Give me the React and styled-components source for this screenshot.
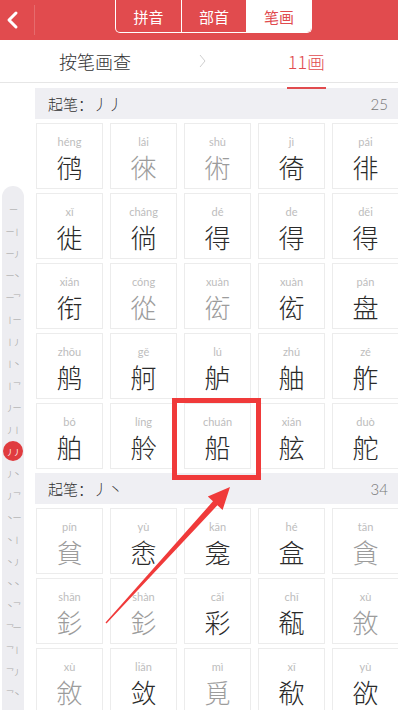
import React from "react";
import styled, { createGlobalStyle } from "styled-components";

const GlobalStyle = createGlobalStyle`
  html, body {
    margin: 0;
    padding: 0;
    background: #fff;
  }
  body {
    font-family: "Noto Sans CJK SC", "Noto Sans", sans-serif;
  }
  * {
    box-sizing: border-box;
  }
`;

const Page = styled.div`
  position: relative;
  width: 398px;
  height: 710px;
  overflow: hidden;
  background: #fff;
`;

const TopBar = styled.header`
  display: flex;
  align-items: center;
  height: 40px;
  background: #e14b4e;
`;

const BackButton = styled.div`
  display: flex;
  align-items: center;
  justify-content: flex-start;
  width: 35px;
  height: 30px;
  padding-left: 6px;
  border-right: 1px solid rgba(255, 255, 255, 0.18);
`;

const Segmented = styled.div`
  display: flex;
  align-self: flex-start;
  height: 33px;
  margin-left: 80px;
  border: 1px solid #fff;
  border-top: none;
  border-radius: 0 0 5px 5px;
  overflow: hidden;
`;

const SegTab = styled.div`
  display: flex;
  align-items: center;
  justify-content: center;
  width: 65px;
  font-size: 15px;
  color: ${p => (p.active ? "#e14b4e" : "#fff")};
  background: ${p => (p.active ? "#fff" : "transparent")};
  & + & {
    border-left: 1px solid #fff;
  }
`;

const TabRow = styled.nav`
  display: grid;
  grid-template-columns: 190px 25px 1fr;
  height: 43px;
  border-bottom: 1px solid #e6e6e6;
`;

const TabLabel = styled.div`
  display: flex;
  align-items: center;
  justify-content: center;
  font-size: 18px;
  font-weight: 300;
  color: ${p => (p.active ? "#e14b4e" : "#333")};
`;

const ActiveText = styled.span`
  position: relative;
  display: flex;
  align-items: center;
  height: 100%;
  &::after {
    content: "";
    position: absolute;
    left: -1px;
    right: -1px;
    top: 47px;
    height: 2px;
    background: #e14b4e;
    z-index: 2;
  }
`;

const Crumb = styled.div`
  display: flex;
  align-items: center;
  justify-content: center;
`;

const Body = styled.div`
  display: flex;
`;

const SideColumn = styled.aside`
  width: 35px;
  flex: none;
`;

const StrokeNav = styled.ul`
  list-style: none;
  margin: 103px 0 0 2px;
  padding: 12px 0 0;
  width: 22px;
  min-height: 640px;
  border-radius: 11px 11px 0 0;
  background: #ededf1;
`;

const StrokeItem = styled.li`
  display: flex;
  align-items: center;
  justify-content: center;
  height: 22px;
  font-size: 8px;
  letter-spacing: -1px;
  color: #adadad;
  white-space: nowrap;
`;

const StrokeBadge = styled.span`
  display: flex;
  align-items: center;
  justify-content: center;
  width: 20px;
  height: 20px;
  border-radius: 50%;
  background: #e03c3f;
  color: #fff;
`;

const List = styled.main`
  flex: 1;
  padding-top: 5px;
`;

const SectionHead = styled.div`
  display: flex;
  align-items: center;
  justify-content: space-between;
  height: 31px;
  padding: 0 11px 0 13px;
  background: #efeff3;
  font-size: 15px;
  font-weight: 300;
  color: #333;
`;

const Count = styled.span`
  font-family: "Lato", "Noto Sans", sans-serif;
  font-size: 15px;
  color: #777;
`;

const Grid = styled.div`
  display: grid;
  grid-template-columns: repeat(5, 67px);
  gap: 4px 7px;
  padding: 4px 0 4px 1px;
`;

const Cell = styled.div`
  display: flex;
  flex-direction: column;
  align-items: center;
  height: 66px;
  padding-top: 12px;
  border: 1px solid #ececec;
  background: #fff;
`;

const Pinyin = styled.span`
  font-family: "Lato", "Noto Sans", sans-serif;
  font-size: 11px;
  line-height: 12px;
  color: #bdbdbd;
`;

const Hanzi = styled.span`
  margin-top: 4px;
  font-size: 26px;
  font-weight: 300;
  line-height: 30px;
  color: ${p => (p.muted ? "#9c9c9c" : "#2a2a2a")};
`;

const Highlight = styled.div`
  position: absolute;
  left: 172px;
  top: 398px;
  width: 89px;
  height: 82px;
  border: 5px solid #f03a3a;
  pointer-events: none;
`;

const Overlay = styled.svg`
  position: absolute;
  left: 0;
  top: 0;
  pointer-events: none;
`;

const strokes = [
  "一", "一丨", "一丿", "一丶", "一乛", "丨一", "丨丿", "丨丶", "丨乛",
  "丿一", "丿丨", "丿丿", "丿丶", "丿乛", "丶一", "丶丨", "丶丿", "丶丶",
  "丶乛", "乛一", "乛丨", "乛丿", "乛丶", "乛乛"
];

const sections = [
  {
    title: "起笔：丿丿",
    count: 25,
    chars: [
      ["héng", "鸻"], ["lái", "徠", 1], ["shù", "術", 1], ["jì", "徛"], ["pái", "徘"],
      ["xǐ", "徙"], ["cháng", "徜"], ["dé", "得"], ["de", "得"], ["děi", "得"],
      ["xián", "衔"], ["cóng", "從", 1], ["xuàn", "衒", 1], ["xuàn", "衒"], ["pán", "盘"],
      ["zhōu", "鸼"], ["gě", "舸"], ["lú", "舻"], ["zhú", "舳"], ["zé", "舴"],
      ["bó", "舶"], ["líng", "舲"], ["chuán", "船"], ["xián", "舷"], ["duò", "舵"]
    ]
  },
  {
    title: "起笔：丿丶",
    count: 34,
    chars: [
      ["pín", "貧", 1], ["yù", "悆"], ["kān", "龛"], ["hé", "盒"], ["tān", "貪", 1],
      ["shān", "釤", 1], ["shàn", "釤", 1], ["cǎi", "彩"], ["chī", "瓻"], ["xù", "敘", 1],
      ["xù", "敘", 1], ["liǎn", "敛"], ["mì", "覓", 1], ["xī", "欷"], ["yù", "欲"]
    ]
  }
];

const App = () => {
  return (
    <Page>
      <GlobalStyle />
      <TopBar>
        <BackButton>
          <svg width="14" height="20" viewBox="0 0 14 20">
            <polyline
              points="10,3 3,10 10,17"
              fill="none"
              stroke="#fff"
              strokeWidth="3"
              strokeLinecap="round"
              strokeLinejoin="round"
            />
          </svg>
        </BackButton>
        <Segmented>
          <SegTab>拼音</SegTab>
          <SegTab>部首</SegTab>
          <SegTab active>笔画</SegTab>
        </Segmented>
      </TopBar>

      <TabRow>
        <TabLabel>按笔画查</TabLabel>
        <Crumb>
          <svg width="9" height="16" viewBox="0 0 9 16">
            <polyline points="2,2 7,8 2,14" fill="none" stroke="#cfcfcf" strokeWidth="1" />
          </svg>
        </Crumb>
        <TabLabel active>
          <ActiveText>11画</ActiveText>
        </TabLabel>
      </TabRow>

      <Body>
        <SideColumn>
          <StrokeNav>
            {strokes.map(s => (
              <StrokeItem key={s}>
                {s === "丿丿" ? <StrokeBadge>{s}</StrokeBadge> : s}
              </StrokeItem>
            ))}
          </StrokeNav>
        </SideColumn>
        <List>
          {sections.map(sec => (
            <section key={sec.title}>
              <SectionHead>
                <span>{sec.title}</span>
                <Count>{sec.count}</Count>
              </SectionHead>
              <Grid>
                {sec.chars.map(([py, ch, muted], i) => (
                  <Cell key={i}>
                    <Pinyin>{py}</Pinyin>
                    <Hanzi muted={muted}>{ch}</Hanzi>
                  </Cell>
                ))}
              </Grid>
            </section>
          ))}
        </List>
      </Body>

      <Highlight />
      <Overlay width="398" height="710">
        <polygon
          points="105.5,622.5 213,501.3 207.8,496.6 230,487 222.6,510 217.4,505.3 106.5,623.5"
          fill="#f03a3a"
        />
      </Overlay>
    </Page>
  );
};

export default App;
